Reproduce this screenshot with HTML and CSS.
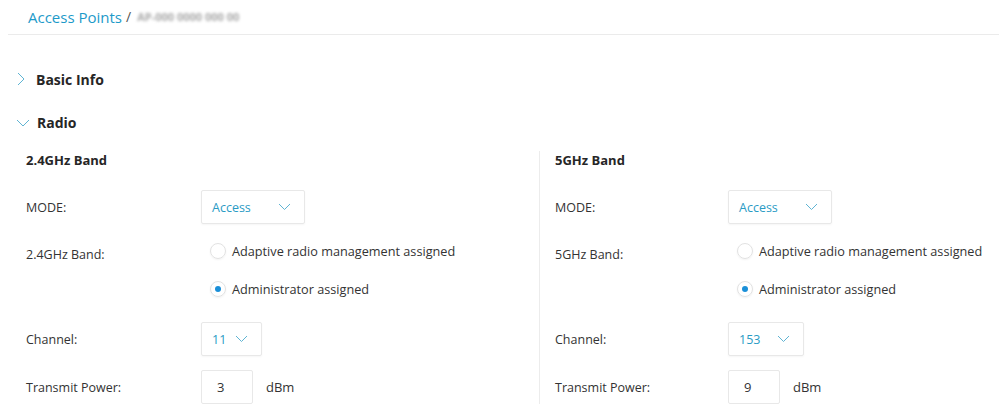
FILE: index.html
```html
<!DOCTYPE html>
<html>
<head>
<meta charset="utf-8">
<link rel="stylesheet" href="styles.css">
</head>
<body>
<div class="crumbs">
  <span class="crumb-link">Access Points</span>
  <span class="crumb-sep">/</span>
  <span class="crumb-blur">AP-000 0000 000 00</span>
</div>

<div class="section-head">
  <svg class="chev-right" width="8" height="14" viewBox="0 0 8 14"><path d="M1 1 L7 7 L1 13" fill="none" stroke="#5fb4d3" stroke-width="1"/></svg>
  <span>Basic Info</span>
</div>

<div class="section-head radio-head">
  <svg class="chev-down" width="14" height="8" viewBox="0 0 14 8"><path d="M1 1 L7 7 L13 1" fill="none" stroke="#5fb4d3" stroke-width="1"/></svg>
  <span>Radio</span>
</div>

<div class="bands">
  <div class="band band-left">
    <div class="band-title">2.4GHz Band</div>
    <div class="row row-mode">
      <div class="label">MODE:</div>
      <div class="select sel-mode"><span>Access</span><svg width="13" height="8" viewBox="0 0 13 8"><path d="M1 1 L6.5 6.5 L12 1" fill="none" stroke="#5fb4d3" stroke-width="1"/></svg></div>
    </div>
    <div class="row row-band">
      <div class="label label-band">2.4GHz Band:</div>
      <div class="options">
        <div class="opt"><span class="radio"></span>Adaptive radio management assigned</div>
        <div class="opt"><span class="radio checked"></span>Administrator assigned</div>
      </div>
    </div>
    <div class="row row-chan">
      <div class="label">Channel:</div>
      <div class="select sel-chan"><span>11</span><svg width="13" height="8" viewBox="0 0 13 8"><path d="M1 1 L6.5 6.5 L12 1" fill="none" stroke="#5fb4d3" stroke-width="1"/></svg></div>
    </div>
    <div class="row row-power">
      <div class="label">Transmit Power:</div>
      <div class="input">3</div>
      <span class="unit">dBm</span>
    </div>
  </div>

  <div class="band band-right">
    <div class="band-title">5GHz Band</div>
    <div class="row row-mode">
      <div class="label">MODE:</div>
      <div class="select sel-mode"><span>Access</span><svg width="13" height="8" viewBox="0 0 13 8"><path d="M1 1 L6.5 6.5 L12 1" fill="none" stroke="#5fb4d3" stroke-width="1"/></svg></div>
    </div>
    <div class="row row-band">
      <div class="label label-band">5GHz Band:</div>
      <div class="options">
        <div class="opt"><span class="radio"></span>Adaptive radio management assigned</div>
        <div class="opt"><span class="radio checked"></span>Administrator assigned</div>
      </div>
    </div>
    <div class="row row-chan">
      <div class="label">Channel:</div>
      <div class="select sel-chan5"><span>153</span><svg width="13" height="8" viewBox="0 0 13 8"><path d="M1 1 L6.5 6.5 L12 1" fill="none" stroke="#5fb4d3" stroke-width="1"/></svg></div>
    </div>
    <div class="row row-power">
      <div class="label">Transmit Power:</div>
      <div class="input">9</div>
      <span class="unit">dBm</span>
    </div>
  </div>
</div>
</body>
</html>
```

FILE: styles.css
```css
* { box-sizing: border-box; }
body {
  margin: 0;
  font-family: "Open Sans", "Noto Sans", sans-serif;
  color: #333;
  background: #fff;
  overflow: hidden;
}
.crumbs {
  margin-left: 8px;
  padding-left: 20px;
  height: 35px;
  line-height: 34px;
  border-bottom: 1px solid #ebebeb;
  font-size: 15px;
  display: flex;
  align-items: center;
  gap: 4px;
}
.crumb-link { color: #1d9ac9; }
.crumb-sep { color: #555; font-size: 14px; }
.crumb-blur {
  color: #a8a8a8;
  filter: blur(1.4px);
  font-size: 11px;
  font-weight: 700;
  margin-left: 2px;
}
.section-head {
  display: flex;
  align-items: center;
  height: 30px;
  margin-top: 29px;
  padding-left: 16px;
  font-size: 14px;
  font-weight: 700;
  color: #262626;
}
.chev-right { margin-right: 11px; margin-left: 1px; }
.radio-head { margin-top: 13px; }
.chev-down { margin-right: 7px; margin-top: 1px; }
.bands {
  display: flex;
  margin-top: 13px;
}
.band-left {
  width: 540px;
  padding-left: 26px;
  border-right: 1px solid #ececec;
  margin-top: 1px;
}
.band-right {
  padding-left: 15px;
  margin-top: 1px;
}
.band-title {
  font-size: 13px;
  font-weight: 700;
  color: #262626;
  line-height: 18px;
}
.row {
  display: flex;
  align-items: center;
}
.label {
  font-size: 12.5px;
  color: #333;
}
.band-left .label { width: 175px; }
.band-right .label { width: 173px; }
.row-mode { margin-top: 21px; }
.select {
  height: 34px;
  border: 1px solid #e8e8e8;
  border-radius: 2px;
  box-shadow: 0 1px 2px rgba(0,0,0,0.04);
  display: flex;
  align-items: center;
  justify-content: space-between;
  padding-left: 10px;
  padding-right: 13px;
  color: #2a9bc5;
  font-size: 12.5px;
}
.select svg { margin-top: -1px; }
.sel-mode { width: 104px; }
.sel-chan { width: 61px; }
.sel-chan5 { width: 76px; }
.row-band {
  margin-top: 8px;
  align-items: flex-start;
}
.label-band { padding-top: 14px; }
.options { display: flex; flex-direction: column; }
.opt {
  height: 38px;
  display: flex;
  align-items: center;
  font-size: 12.7px;
  color: #333;
  padding-left: 9px;
}
.radio {
  width: 16px;
  height: 16px;
  border-radius: 50%;
  border: 1px solid #e2e2e2;
  box-shadow: 0 1px 2px rgba(0,0,0,0.05);
  margin-right: 6px;
  display: flex;
  align-items: center;
  justify-content: center;
}
.radio.checked::after {
  content: "";
  width: 6px;
  height: 6px;
  border-radius: 50%;
  background: #1a8fd8;
}
.row-chan { margin-top: 14px; }
.row-power { margin-top: 14px; }
.input {
  width: 52px;
  height: 34px;
  border: 1px solid #e8e8e8;
  border-radius: 2px;
  display: flex;
  align-items: center;
  padding-left: 15px;
  font-size: 13px;
  color: #333;
}
.unit {
  margin-left: 13px;
  font-size: 13px;
  color: #333;
}
```
